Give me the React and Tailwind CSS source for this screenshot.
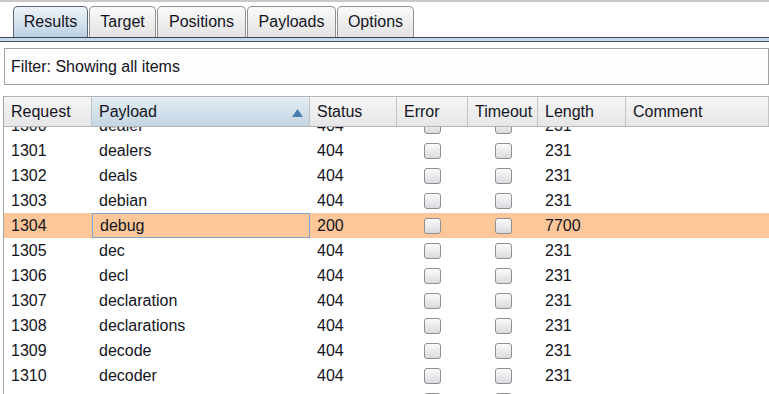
import React from 'react';

const tabs = [
  { name: 'Results', w: 'w-[75px]', active: true },
  { name: 'Target', w: 'w-[67px]' },
  { name: 'Positions', w: 'w-[89px]' },
  { name: 'Payloads', w: 'w-[89px]' },
  { name: 'Options', w: 'w-[77px]' },
];

const cols = [
  { name: 'Request', w: 'w-[88px]' },
  { name: 'Payload', w: 'w-[218px]', sorted: true },
  { name: 'Status', w: 'w-[87px]' },
  { name: 'Error', w: 'w-[71px]' },
  { name: 'Timeout', w: 'w-[70px]' },
  { name: 'Length', w: 'w-[88px]' },
  { name: 'Comment', w: 'flex-1' },
];

const rows = [
  ['1300', 'dealer', '404', '231'],
  ['1301', 'dealers', '404', '231'],
  ['1302', 'deals', '404', '231'],
  ['1303', 'debian', '404', '231'],
  ['1304', 'debug', '200', '7700'],
  ['1305', 'dec', '404', '231'],
  ['1306', 'decl', '404', '231'],
  ['1307', 'declaration', '404', '231'],
  ['1308', 'declarations', '404', '231'],
  ['1309', 'decode', '404', '231'],
  ['1310', 'decoder', '404', '231'],
  ['1311', 'decoders', '404', '231'],
];

function Check() {
  return (
    <div className="w-[17px] h-[16px] rounded-[3px] border border-[#8e8f91] bg-gradient-to-b from-[#fbfbfb] to-[#d9dbde]" />
  );
}

export default function App() {
  return (
    <div className="w-[769px] h-[394px] overflow-hidden bg-white text-[16px] text-[#14141e] font-['Liberation_Sans',Arial,sans-serif]">
      {/* tab strip */}
      <div className="h-[37px] border-t-2 border-[#c8c8c8] flex items-end pl-[13px] gap-[1px]">
        {tabs.map((t) => (
          <div
            key={t.name}
            className={`${t.w} h-[31px] flex items-center justify-center rounded-t-[5px] border border-b-0 ${
              t.active
                ? 'border-[#5d6677] bg-gradient-to-b from-[#eef3f7] via-[#d6e3ee] to-[#b9d0e2]'
                : 'border-[#8d8f93] bg-gradient-to-b from-[#fafafa] to-[#e3e3e3]'
            }`}
          >
            {t.name}
          </div>
        ))}
      </div>
      <div className="h-[1px] bg-[#3c4352]" />
      <div className="h-[3px] bg-[#c5d8ea]" />
      <div className="h-[1px] bg-[#4b5262]" />

      {/* filter */}
      <div className="pl-[4px] pt-[6px]">
        <div className="h-[37px] border border-[#a2a2a2] bg-[#fdfdfd] flex items-center pl-[6px]">
          Filter: Showing all items
        </div>
      </div>

      {/* table */}
      <div className="ml-[3px] mt-[11px] border-l border-[#a6a6a6]">
        <div className="flex h-[31px] border-y border-[#b4b4b4] bg-gradient-to-b from-[#f6f6f6] to-[#e6e6e8]">
          {cols.map((c) => (
            <div
              key={c.name}
              className={`${c.w} relative flex items-center pl-[7px] border-r border-[#c4c4c6] ${
                c.sorted ? 'bg-gradient-to-b from-[#e4edf3] to-[#c3d6e4]' : ''
              }`}
            >
              {c.name}
              {c.sorted && (
                <svg className="absolute right-[6px] top-[12px]" width="11" height="8" viewBox="0 0 11 8">
                  <path d="M5.5 0 L11 8 L0 8 Z" fill="#4a7fb0" />
                </svg>
              )}
            </div>
          ))}
        </div>
        <div className="h-[270px] overflow-hidden">
          <div className="-mt-[14px]">
            {rows.map((r) => {
              const hot = r[0] === '1304';
              return (
                <div key={r[0]} className={`flex h-[25px] items-center ${hot ? 'bg-[#fec799]' : ''}`}>
                  <div className="w-[88px] pl-[7px]">{r[0]}</div>
                  <div
                    className={`w-[218px] h-full flex items-center pl-[7px] ${
                      hot ? 'border border-[#7ea3cf] pl-[6px]' : ''
                    }`}
                  >
                    {r[1]}
                  </div>
                  <div className="w-[87px] pl-[7px]">{r[2]}</div>
                  <div className="w-[71px] flex justify-center">
                    <Check />
                  </div>
                  <div className="w-[70px] flex justify-center">
                    <Check />
                  </div>
                  <div className="w-[88px] pl-[7px]">{r[3]}</div>
                  <div className="flex-1" />
                </div>
              );
            })}
          </div>
        </div>
      </div>
    </div>
  );
}
